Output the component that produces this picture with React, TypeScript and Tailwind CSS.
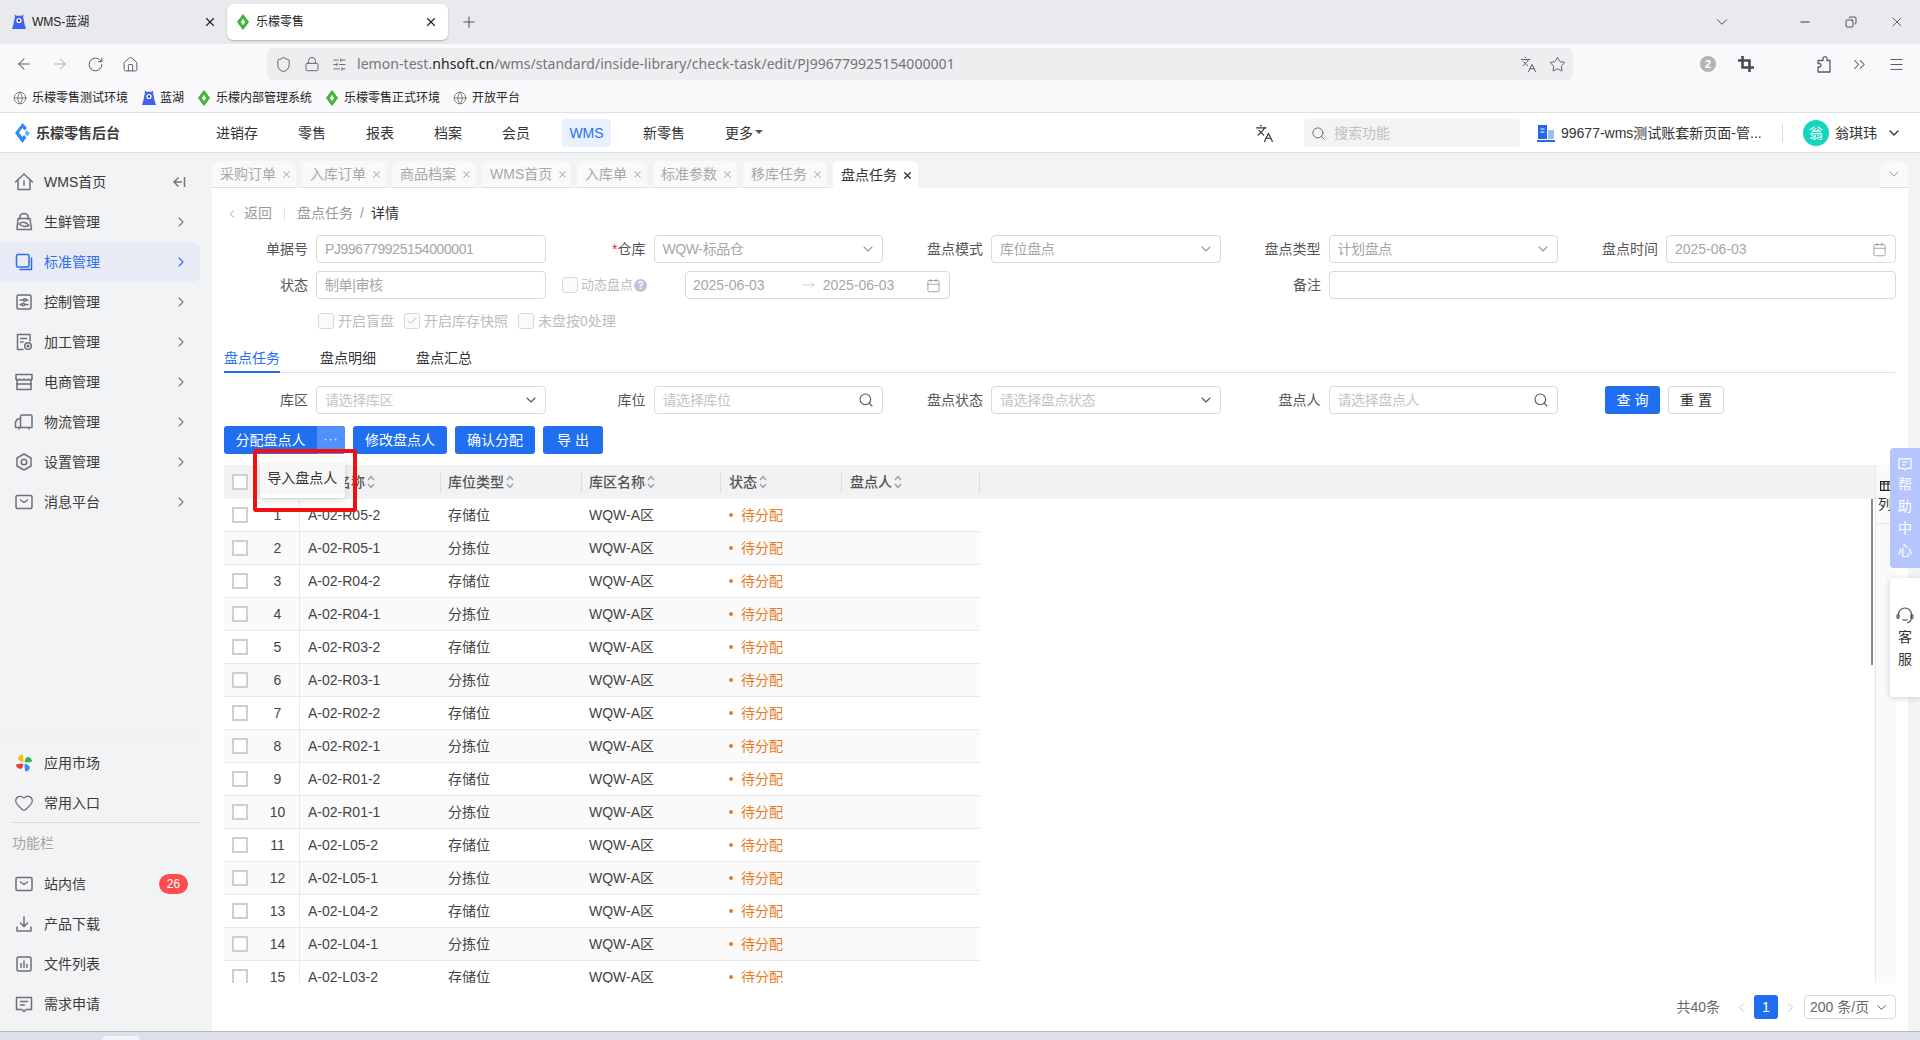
import React from "react";
import { ArrowLeft, ArrowRight, RotateCw, Home, Shield, Lock, SlidersHorizontal, Languages, Star, ChevronsRight, Menu, ChevronDown, ChevronRight, ChevronLeft, Plus, X, Minus, Copy, Search, Calendar, Globe, Check, Heart, MoveRight } from "lucide-react";

const Leaf = () => (
  <svg width={12} height={16} viewBox="0 0 12 16" className="shrink-0">
    <path d="M6 0 C7.5 2 9.5 4.5 12 8 C9.5 11.5 7.5 14 6 16 C4.5 14 2.5 11.5 0 8 C2.5 4.5 4.5 2 6 0 Z M6 4.8 L3.8 8 L6 11.2 L8.2 8 Z" fill="#3fb53a" fillRule="evenodd" />
  </svg>
);
const Lan = () => (
  <svg width={14} height={16} viewBox="0 0 14 16" className="shrink-0">
    <path d="M3 3 L2.5 0.5 L5 2 Q7 1.2 9 2 L11.5 0.5 L11 3 Q12 6 12.5 10 L14 15 H0 L1.5 10 Q2 6 3 3 Z" fill="#3f63f0" />
    <circle cx="7" cy="6.5" r="2.6" fill="#fff" />
    <circle cx="7" cy="6.5" r="1.2" fill="#23306e" />
  </svg>
);
const Logo = () => (
  <svg width={15} height={20} viewBox="0 0 15 20" className="shrink-0">
    <path d="M7.5 0 L12 5 L9.5 7.5 L7.5 5 L4 9.5 L7.5 14 L9 12 L11.5 14.5 L7.5 20 L0 10 Z" fill="#2f8bf5" />
    <path d="M11 7 L15 10 L12.5 13.5 L10 11 Z" fill="#5fb4fa" />
  </svg>
);

const Ico = ({ children, c = "#6e7079" }: { children: React.ReactNode; c?: string }) => (
  <svg width={20} height={20} viewBox="0 0 20 20" fill="none" stroke={c} strokeWidth={1.5} strokeLinecap="round" strokeLinejoin="round" className="shrink-0">
    {children}
  </svg>
);

const Mail = () => <Ico><rect x="2" y="3.5" width="16" height="13" rx="1.5" /><path d="M6.5 8 L10 10.5 L13.5 8" /></Ico>;
const icons: Record<string, React.ReactNode> = {
  home: <Ico><path d="M1.5 10 L10 2 L18.5 10" /><path d="M4 8 V17.5 H16 V8" /><path d="M10 9 V13" /></Ico>,
  fresh: <Ico><path d="M6 7 V4.5 A4 3 0 0 1 14 4.5 V7" /><path d="M4 6.5 H16 L17.5 17.5 H3 Z" /><path d="M5 12 Q10 8 15 13.5 Q10 16 5 12 Z" /></Ico>,
  std: <Ico c="#2a6ff0"><rect x="2.5" y="2.5" width="12.5" height="12.5" rx="1.5" /><path d="M17.5 6 V17.5 H6" /></Ico>,
  ctrl: <Ico><rect x="3" y="3" width="14" height="14" rx="1.5" /><path d="M6 8 H9 M12.5 8 H14 M6 12.5 H7.5 M11 12.5 H14" /><circle cx="10.8" cy="8" r="1.3" /><circle cx="9.2" cy="12.5" r="1.3" /></Ico>,
  proc: <Ico><path d="M9 17.5 H3.5 V2.5 H16 V9" /><path d="M6.5 6.5 H12.5 M6.5 10 H9" /><circle cx="14" cy="14" r="3.3" /><circle cx="14" cy="14" r="0.8" /></Ico>,
  shop: <Ico><path d="M2 7 V2.5 H18 V7" /><path d="M2 7 Q4 9.5 6 7 Q8 9.5 10 7 Q12 9.5 14 7 Q16 9.5 18 7" /><path d="M3 7 V17.5 H17 V7" /><path d="M3 12 H17" /></Ico>,
  truck: <Ico><path d="M6.5 15.5 V4.5 Q6.5 3 8 3 H17 Q18 3 18 4.5 V15.5 H6.5 Z" /><path d="M6.5 7 H3.5 L1.5 10 V15.5 H6.5" /><path d="M5 15.5 V17 M15 15.5 V17" /></Ico>,
  gear: <Ico><path d="M10 2 L17 6 V14 L10 18 L3 14 V6 Z" /><circle cx="10" cy="10" r="2.8" /></Ico>,
  mail: <Mail />,
  down: <Ico><path d="M10 3 V12.5 M6.5 9 L10 12.5 L13.5 9" /><path d="M3 13 V17 H17 V13" /></Ico>,
  file: <Ico><rect x="3" y="3" width="14" height="14" rx="1.5" /><path d="M7 13.5 V9.5 M10 13.5 V7 M13 13.5 V10.5" /></Ico>,
  req: <Ico><path d="M2.5 3.5 H17.5 V15.5 H12 L10 17.5 L8 15.5 H2.5 Z" /><path d="M6.5 7.5 H13.5 M6.5 11 H10.5" /></Ico>,
};

const Pin = () => (
  <svg width={20} height={20} viewBox="0 0 20 20" className="shrink-0">
    <path d="M9.3 9.3 C9.5 6 9.5 3 8.5 1.5 C6 1.5 4.5 3.5 4 6 C5.5 7.5 7 8.7 9.3 9.3 Z" fill="#fbb90e" />
    <path d="M10.7 9.3 C13 9.5 16 9.3 18 8.5 C18 6 16 4 13 4 C11.5 5.5 10.7 7 10.7 9.3 Z" fill="#34b54b" />
    <path d="M9.3 10.7 C7 10.5 4 10.7 2 11.5 C2 14 4 15.8 7 16 C8.5 14.5 9.3 13 9.3 10.7 Z" fill="#ec3b3b" />
    <path d="M10.7 10.7 C10.5 13 10.5 16 11.5 18.5 C14 18.5 15.5 16.5 16 14 C14.5 12.5 13 11.3 10.7 10.7 Z" fill="#2f8bf5" />
  </svg>
);

const Row = ({ icon, label, chev, active, badge }: { icon: React.ReactNode; label: string; chev?: boolean; active?: boolean; badge?: string }) => (
  <div className={`flex h-10 w-[200px] items-center rounded-r-lg pl-[14px] text-[14px] ${badge ? "pr-3" : "pr-[11px]"} ${active ? "bg-[#e8ebf5] text-[#2a6ff0]" : "text-[#3a3a3a]"}`}>
    <span className="w-[30px] shrink-0">{icon}</span>
    <span className="flex-1">{label}</span>
    {chev && <ChevronRight size={16} strokeWidth={1.6} className={active ? "text-[#2a6ff0]" : "text-[#777]"} />}
    {badge && <span className="flex h-5 w-[29px] items-center justify-center rounded-full bg-[#ff4d4f] text-[12px] text-white">{badge}</span>}
  </div>
);

const Field = ({ label, req, children, className = "" }: { label: string; req?: boolean; children: React.ReactNode; className?: string }) => (
  <div className={`flex items-center justify-end gap-2 ${className}`}>
    <span className="whitespace-nowrap text-[14px] text-[#555]">{req && <span className="text-[#f5222d]">*</span>}{label}</span>
    {children}
  </div>
);
const Box = ({ text, ph, icon, wide, plain }: { text?: string; ph?: boolean; icon?: React.ReactNode; wide?: boolean; plain?: boolean }) => (
  <div className={`flex h-7 items-center justify-between rounded-[4px] border border-[#d9d9d9] bg-white pl-2 pr-2 text-[14px] ${wide ? "w-[566.5px]" : "w-[229.5px]"} ${ph ? "text-[#c4c4c4]" : "text-[#a6a6a6]"}`}>
    <span className={`whitespace-nowrap ${plain ? "" : "tracking-[-0.4px]"}`}>{text}</span>
    {icon}
  </div>
);
const Dn = ({ dark }: { dark?: boolean }) => <ChevronDown size={16} strokeWidth={1.6} className={`-mr-[2px] ${dark ? "text-[#555]" : "text-[#999]"}`} />;
const Sq = ({ on }: { on?: boolean }) => (
  <span className="flex h-4 w-4 shrink-0 items-center justify-center rounded-[3px] border border-[#d9d9d9] bg-[#fbfbfb]">
    {on && <Check size={12} strokeWidth={2} className="text-[#bbb]" />}
  </span>
);
const Cb = ({ label, on }: { label: string; on?: boolean }) => (
  <span className="flex items-center gap-1 text-[14px] text-[#bdbdbd]"><Sq on={on} />{label}</span>
);
const Sort = () => (
  <svg width={8} height={14} viewBox="0 0 8 14" fill="none" stroke="#999" strokeWidth={1.2} className="ml-0.5 shrink-0">
    <path d="M1 5 L4 1.5 L7 5 M1 9 L4 12.5 L7 9" />
  </svg>
);

const topTabs: [string, number][] = [
  ["采购订单", 84], ["入库订单", 84], ["商品档案", 84], ["WMS首页", 89], ["入库单", 70], ["标准参数", 84], ["移库任务", 84],
];
const rows = ["R05-2", "R05-1", "R04-2", "R04-1", "R03-2", "R03-1", "R02-2", "R02-1", "R01-2", "R01-1", "L05-2", "L05-1", "L04-2", "L04-1", "L03-2"];
const grid = "grid grid-cols-[32px_44px_140px_141px_139px_121px_139px] w-[756px]";

export default function App() {
  return (
    <div className="relative flex h-[1040px] w-[1920px] flex-col overflow-hidden bg-[#dde0ea] font-['Liberation_Sans','Noto_Sans_CJK_SC',sans-serif] text-[#333]">
      {/* browser tabs */}
      <div className="flex h-11 shrink-0 items-center bg-[#e9eaed] pr-[15px] text-[12px] text-[#222]">
        <div className="flex h-9 w-[224px] items-center pl-[12px] pr-[7px]">
          <span className="mr-[6px]"><Lan /></span>
          <span className="flex-1">WMS-蓝湖</span>
          <X size={14} strokeWidth={2} />
        </div>
        <div className="ml-[3px] flex h-9 w-[221px] items-center rounded-md bg-white pl-[10px] pr-[10px] shadow-[0_1px_2px_rgba(0,0,0,0.25)]">
          <span className="mr-[7px]"><Leaf /></span>
          <span className="flex-1">乐檬零售</span>
          <X size={14} strokeWidth={2} />
        </div>
        <Plus size={18} strokeWidth={1.4} className="ml-[12px] text-[#555]" />
        <div className="flex-1" />
        <ChevronDown size={18} strokeWidth={1.3} className="mr-[67px] text-[#444]" />
        <Minus size={14} strokeWidth={1.5} className="mr-[33px] text-[#222]" />
        <Copy size={12} strokeWidth={1.5} className="mr-[32px] -scale-x-100 text-[#222]" />
        <X size={16} strokeWidth={1} className="text-[#222]" />
      </div>
      {/* toolbar */}
      <div className="flex h-10 shrink-0 items-center bg-[#f9f9fb] text-[#5b5b66]">
        <div className="flex w-[267px] items-center gap-[18px] pl-[15px]">
          <ArrowLeft size={18} strokeWidth={1.4} />
          <ArrowRight size={18} strokeWidth={1.4} className="text-[#b0b0b8]" />
          <RotateCw size={17} strokeWidth={1.4} />
          <Home size={17} strokeWidth={1.4} />
        </div>
        <div className="flex h-8 w-[1306px] items-center rounded-md bg-[#eeeef1] pl-[8px] pr-[7px]">
          <Shield size={17} strokeWidth={1.4} />
          <Lock size={16} strokeWidth={1.4} className="ml-[12px]" />
          <SlidersHorizontal size={15} strokeWidth={1.4} className="ml-[12px]" />
          <span className="mb-[2px] ml-[10px] flex-1 whitespace-nowrap font-['Noto_Sans',sans-serif] text-[14px] tracking-[0.05px] text-[#74747c]">lemon-test.<span className="text-[#222]">nhsoft.cn</span>/wms/standard/inside-library/check-task/edit/PJ996779925154000001</span>
          <Languages size={17} strokeWidth={1.4} />
          <Star size={17} strokeWidth={1.4} className="ml-[12px]" />
        </div>
        <span className="ml-[127px] flex h-4 w-4 items-center justify-center rounded-full bg-[#b4b4b8] text-[11px] font-bold text-white">2</span>
        <svg width={16} height={16} viewBox="0 0 16 16" fill="none" stroke="#4a4a55" strokeWidth={2.6} className="ml-[22px] shrink-0">
          <path d="M4.5 0 V11.5 H16 M0 4.5 H11.5 V16" />
        </svg>
        <svg width={16} height={18} viewBox="0 0 16 18" fill="none" stroke="#5b5b66" strokeWidth={1.3} strokeLinejoin="round" className="ml-[62px] shrink-0">
          <path d="M2 17 V12 H4 A2 2 0 0 0 4 8.5 H2 V5.5 H7 V3 A2.2 2.2 0 0 1 11 3 V5.5 H14 V17 Z" />
        </svg>
        <ChevronsRight size={19} strokeWidth={1.3} className="ml-[18px]" />
        <Menu size={17} strokeWidth={1.4} className="ml-[19px]" />
      </div>
      {/* bookmarks */}
      <div className="flex h-7 shrink-0 items-center bg-[#f9f9fb] pl-[13px] text-[12px] text-[#222]">
        <Globe size={14} strokeWidth={1.2} className="mr-[5px] text-[#555]" />
        <span>乐檬零售测试环境</span>
        <span className="ml-[14px] mr-[4px]"><Lan /></span>
        <span>蓝湖</span>
        <span className="ml-[14px] mr-[6px]"><Leaf /></span>
        <span>乐檬内部管理系统</span>
        <span className="ml-[14px] mr-[6px]"><Leaf /></span>
        <span>乐檬零售正式环境</span>
        <Globe size={14} strokeWidth={1.2} className="ml-[13px] mr-[5px] text-[#555]" />
        <span>开放平台</span>
      </div>
      {/* app header */}
      <div className="flex h-[41px] shrink-0 items-center border-y border-[#dedfe2] bg-white pt-[1px] text-[14px]">
        <div className="flex w-[216px] items-center pl-[15px]">
          <Logo />
          <span className="ml-[6px] font-bold text-[#3c3c3c]">乐檬零售后台</span>
        </div>
        <span>进销存</span>
        <span className="ml-[40px]">零售</span>
        <span className="ml-[40px]">报表</span>
        <span className="ml-[40px]">档案</span>
        <span className="ml-[40px]">会员</span>
        <span className="ml-[32px] flex h-7 w-[49px] items-center justify-center rounded bg-[#e8f0fe] text-[#2a6ff0]">WMS</span>
        <span className="ml-[32px]">新零售</span>
        <span className="ml-[40px] flex items-center">更多<span className="ml-[2px] mt-[-2px] h-0 w-0 border-x-[4px] border-t-[4px] border-x-transparent border-t-[#555]" /></span>
        <div className="flex-1" />
        <Languages size={19} strokeWidth={1.5} className="mr-[30px] text-[#333]" />
        <div className="flex h-7 w-[216px] items-center rounded bg-[#f2f3f5] pl-[7px] text-[#c0c0c0]">
          <Search size={15} strokeWidth={1.5} className="mr-[8px] text-[#666]" />搜索功能
        </div>
        <svg width={18} height={18} viewBox="0 0 18 18" className="ml-[17px] mr-[6px] shrink-0">
          <path d="M1 1 H10 V15 H1 Z" fill="#2468e8" />
          <path d="M11 6 H17 V15 H11 Z" fill="#9bbcf5" />
          <path d="M0 16 H18 V18 H0 Z" fill="#2468e8" />
          <path d="M3.5 5 H7.5 M3.5 8 H7.5" stroke="#fff" strokeWidth={1.2} />
        </svg>
        <span className="w-[200px] whitespace-nowrap">99677-wms测试账套新页面-管...</span>
        <span className="ml-[21px] h-[18px] w-px bg-[#d9d9d9]" />
        <span className="ml-[20px] flex h-[26px] w-[26px] items-center justify-center rounded-full bg-[#14d6bf] text-[14px] text-white">翁</span>
        <span className="ml-[6px]">翁琪玮</span>
        <ChevronDown size={16} strokeWidth={2} className="ml-[9px] mr-[18px]" />
      </div>
      {/* body */}
      <div className="flex min-h-0 flex-1 border-b border-[#b4b6bb]">
        <aside className="flex w-[212px] shrink-0 flex-col bg-[#f2f3f5] pt-[9px]">
          <div className="flex h-10 w-[200px] items-center pl-[14px] pr-[14px] text-[14px] text-[#3a3a3a]">
            <span className="w-[30px]">{icons.home}</span>
            <span className="flex-1">WMS首页</span>
            <svg width={14} height={14} viewBox="0 0 14 14" fill="none" stroke="#777" strokeWidth={1.5}><path d="M6.5 2.5 L2 7 L6.5 11.5 M2 7 H10 M12.5 2 V12" /></svg>
          </div>
          <Row icon={icons.fresh} label="生鲜管理" chev />
          <Row icon={icons.std} label="标准管理" chev active />
          <Row icon={icons.ctrl} label="控制管理" chev />
          <Row icon={icons.proc} label="加工管理" chev />
          <Row icon={icons.shop} label="电商管理" chev />
          <Row icon={icons.truck} label="物流管理" chev />
          <Row icon={icons.gear} label="设置管理" chev />
          <Row icon={icons.mail} label="消息平台" chev />
          <div className="flex-1" />
          <div className="h-[10px] w-[200px] bg-[#f0f1f3]" />
          <div className="mt-[4px]"><Row icon={<Pin />} label="应用市场" /></div>
          <Row icon={<Heart size={20} strokeWidth={1.5} className="text-[#6e7079]" />} label="常用入口" />
          <div className="-mt-px ml-3 h-px w-[188px] bg-[#dcdde0]" />
          <div className="flex h-[41px] items-center pl-3 text-[14px] text-[#a3a3a3]">功能栏</div>
          <Row icon={icons.mail} label="站内信" badge="26" />
          <Row icon={icons.down} label="产品下载" />
          <Row icon={icons.file} label="文件列表" />
          <Row icon={icons.req} label="需求申请" />
          <div className="h-[7px]" />
        </aside>
        <div className="flex min-w-0 flex-1 flex-col bg-[#f2f3f5]">
          {/* page tabs */}
          <div className="flex h-[35px] shrink-0 items-end gap-[6px] pr-[12px]">
            {topTabs.map(([t, w]) => (
              <div key={t} style={{ width: w }} className="flex h-[27px] items-center gap-[5px] rounded-t-md border-b border-[#dcdde0] bg-[#f9f9fa] pl-2 pt-[1px] text-[14px] text-[#a8a8a8]">
                {t}<X size={11} strokeWidth={2.2} className="text-[#aaa]" />
              </div>
            ))}
            <div className="flex h-[27px] w-[85px] items-center gap-[5px] rounded-t-md bg-white pl-2 pt-[1px] text-[14px] text-[#333]">
              盘点任务<X size={11} strokeWidth={3} className="text-[#333]" />
            </div>
            <div className="flex-1" />
            <div className="flex h-[27px] w-[28px] items-center justify-center rounded-t-md border-b border-[#dcdde0] bg-[#f9f9fa]"><ChevronDown size={16} strokeWidth={1.4} className="text-[#999]" /></div>
          </div>
          {/* page */}
          <div className="mr-[12px] flex min-h-0 flex-1 flex-col bg-white">
            <div className="flex h-[47px] shrink-0 items-center pl-[13px] pt-[4px] text-[14px] text-[#999]">
              <ChevronLeft size={14} strokeWidth={1.5} className="mr-[5px]" />返回
              <span className="mx-[12px] h-3.5 w-px bg-[#e5e5e5]" />
              盘点任务<span className="mx-[7px]">/</span><span className="text-[#333]">详情</span>
            </div>
            <div className="grid grid-cols-[333.5px_repeat(4,337.5px)] gap-y-[8px]">
              <Field label="单据号"><Box text="PJ996779925154000001" /></Field>
              <Field label="仓库" req><Box text="WQW-标品仓" icon={<Dn />} /></Field>
              <Field label="盘点模式"><Box text="库位盘点" icon={<Dn />} /></Field>
              <Field label="盘点类型"><Box text="计划盘点" icon={<Dn />} /></Field>
              <Field label="盘点时间"><Box plain text="2025-06-03" icon={<Calendar size={15} strokeWidth={1.4} className="text-[#999]" />} /></Field>
              <Field label="状态"><Box text="制单|审核" /></Field>
              <div className="col-span-2 flex items-center pl-[16.5px]">
                <Sq /><span className="ml-[3px] text-[13px] text-[#bdbdbd]">动态盘点</span>
                <span className="ml-[1px] flex h-[13px] w-[13px] items-center justify-center rounded-full bg-[#bcc3d4] text-[10px] font-bold text-white">?</span>
                <div className="ml-[38px] flex h-7 w-[265px] items-center rounded-[4px] border border-[#d9d9d9] pl-[7px] pr-2 text-[14px] text-[#a6a6a6]">
                  2025-06-03
                  <MoveRight size={14} strokeWidth={1.2} className="ml-[36px] mr-[8px] text-[#bbb]" />
                  2025-06-03
                  <span className="flex-1" />
                  <Calendar size={15} strokeWidth={1.4} className="text-[#999]" />
                </div>
              </div>
              <Field label="备注" className="col-span-2"><Box wide /></Field>
            </div>
            <div className="flex h-[46px] shrink-0 items-center gap-[4px] pb-[2px] pl-[106px]">
              <Cb label="开启盲盘" /><span className="w-[2px]" /><Cb label="开启库存快照" on /><span className="w-[2px]" /><Cb label="未盘按0处理" />
            </div>
            {/* inner tabs */}
            <div className="ml-[12px] mr-[13px] flex h-[28px] shrink-0 items-start gap-[40px] border-b border-[#dfe1e4] pt-[3px] text-[14px]">
              <span className="h-[25px] border-b-2 border-[#1f6ff0] text-[#1f6ff0]">盘点任务</span>
              <span className="text-[#333]">盘点明细</span>
              <span className="text-[#333]">盘点汇总</span>
            </div>
            <div className="mt-[13px] grid shrink-0 grid-cols-[333.5px_repeat(4,337.5px)]">
              <Field label="库区"><Box ph text="请选择库区" icon={<Dn dark />} /></Field>
              <Field label="库位"><Box ph text="请选择库位" icon={<Search size={16} strokeWidth={1.6} className="text-[#555]" />} /></Field>
              <Field label="盘点状态"><Box ph text="请选择盘点状态" icon={<Dn dark />} /></Field>
              <Field label="盘点人"><Box ph text="请选择盘点人" icon={<Search size={16} strokeWidth={1.6} className="text-[#555]" />} /></Field>
              <div className="flex items-center pl-[47px] text-[14px]">
                <span className="flex h-7 w-[55px] items-center justify-center rounded-[3px] bg-[#1f6ff0] text-white">查 询</span>
                <span className="ml-[8px] flex h-7 w-[56px] items-center justify-center rounded-[3px] border border-[#d9d9d9] text-[#333]">重 置</span>
              </div>
            </div>
            {/* action buttons */}
            <div className="relative mt-[12px] flex shrink-0 gap-[8px] pl-[12px] text-[14px] text-white">
              <div className="flex h-7 w-[121px] overflow-hidden rounded-[3px] bg-[#1f6ff0]">
                <span className="flex flex-1 items-center justify-center">分配盘点人</span>
                <span className="flex w-[28px] items-center justify-center bg-[#5290fb] pb-[2px] text-[12px] tracking-[1px]">···</span>
              </div>
              <span className="flex h-7 w-[94px] items-center justify-center rounded-[3px] bg-[#1f6ff0]">修改盘点人</span>
              <span className="flex h-7 w-[80px] items-center justify-center rounded-[3px] bg-[#1f6ff0]">确认分配</span>
              <span className="flex h-7 w-[60px] items-center justify-center rounded-[3px] bg-[#1f6ff0]">导 出</span>
              {/* popup */}
              <div className="absolute left-[47.5px] top-[32px] z-20 h-10 w-[85.5px] rounded-[3px] bg-white py-1 shadow-[0_2px_8px_rgba(0,0,0,0.15)]">
                <div className="flex h-8 items-center justify-center bg-[#f7f7f7] pt-[1px] text-[14px] text-[#333]">导入盘点人</div>
              </div>
              <div className="absolute left-[41px] top-[23px] z-30 h-[63px] w-[104px] rounded-[3px] border-4 border-[#f01010]" />
            </div>
            {/* table */}
            <div className="ml-[12px] mr-[12px] mt-[11px] flex min-h-0 flex-1">
              <div className="relative min-w-0 flex-1 overflow-hidden">
                <div className="flex h-[34px] items-center bg-[#f1f2f4]">
                  <div className={`${grid} items-center text-[14px] font-medium text-[#555]`}>
                    <span className="pl-2"><span className="flex h-4 w-4 border-2 border-[#cfcfcf] bg-white" /></span>
                    <span />
                    <span className="flex items-center pl-[9px]">库位名称<Sort /></span>
                    <span className="flex items-center border-l border-[#dcdcdc] pl-[7px]">库位类型<Sort /></span>
                    <span className="flex items-center border-l border-[#dcdcdc] pl-[7px]">库区名称<Sort /></span>
                    <span className="flex items-center border-l border-[#dcdcdc] pl-[8px]">状态<Sort /></span>
                    <span className="flex items-center border-x border-[#dcdcdc] pl-[8px]">盘点人<Sort /></span>
                  </div>
                </div>
                {rows.map((r, i) => (
                  <div key={r} className={`${grid} h-[33px] items-center border-b border-[#e8eaeb] text-[14px] text-[#444] ${i % 2 ? "bg-[#f9faf9]" : "bg-white"}`}>
                    <span className="pl-2"><span className="flex h-4 w-4 border-2 border-[#cfcfcf] bg-white" /></span>
                    <span className="flex h-full items-center justify-center border-r border-[#e8eaeb]">{i + 1}</span>
                    <span className="pl-[8px]">A-02-{r}</span>
                    <span className="pl-[8px]">{i % 2 ? "分拣位" : "存储位"}</span>
                    <span className="pl-[8px]">WQW-A区</span>
                    <span className="flex items-center pl-[9px] text-[#ea7a1f]"><span className="mr-[8px] h-[4px] w-[4px] rounded-full bg-[#ea7a1f]" />待分配</span>
                    <span />
                  </div>
                ))}
                <div className="absolute right-[2px] top-[34px] h-[166px] w-[2px] bg-[#8a8a8a]" />
              </div>
              <div className="w-[21px] shrink-0 border-l border-[#e4e6e9] bg-[#f9fafb]">
                <div className="h-[59px] border-b border-[#e4e6e9] pl-[4px] pt-[16px] text-[14px] leading-[17px] text-[#333]">
                  <svg width={12} height={10} viewBox="0 0 12 10" fill="none" stroke="#222" strokeWidth={1.2} className="block"><rect x="0.6" y="0.6" width="10.8" height="8.8" /><path d="M4 0.6 V9.4 M8 0.6 V9.4 M0.6 3 H11.4" /></svg>
                  <div className="mt-[5px] -ml-[2px] overflow-hidden whitespace-nowrap">列</div>
                </div>
              </div>
            </div>
            {/* pagination */}
            <div className="flex h-[48px] shrink-0 items-center justify-end pr-[12px] text-[14px] text-[#666]">
              共40条
              <ChevronLeft size={15} strokeWidth={1.3} className="ml-[14px] text-[#bbb]" />
              <span className="ml-[5px] flex h-6 w-6 items-center justify-center rounded-[3px] bg-[#1f6ff0] text-white">1</span>
              <ChevronRight size={15} strokeWidth={1.3} className="ml-[5px] text-[#bbb]" />
              <span className="ml-[6px] flex h-6 w-[92px] items-center justify-between rounded-[4px] border border-[#d9d9d9] pl-[5px] pr-[6px]">200 条/页<ChevronDown size={15} strokeWidth={1.6} className="text-[#555]" /></span>
            </div>
          </div>
        </div>
      </div>
      {/* bottom strip */}
      <div className="flex h-[8px] shrink-0 items-end bg-[#dde0ea] pl-[102px]">
        <span className="h-[4px] w-[38px] rounded-t-md bg-[#f3f4f7]" />
      </div>
      {/* floating help */}
      <div className="absolute left-[1890px] top-[448px] z-40 flex h-[120px] w-[30px] flex-col items-center rounded-l-[4px] bg-[#b5c6ff] pt-[8px] text-[14px] leading-[22px] text-white">
        <svg width={16} height={16} viewBox="0 0 20 20" fill="none" stroke="#fff" strokeWidth={1.5}><path d="M2.5 3.5 H17.5 V15.5 H12 L10 17.5 L8 15.5 H2.5 Z" /><path d="M6.5 7.5 H13.5 M6.5 11 H10.5" /></svg>
        <span className="mt-[1px]">帮</span><span>助</span><span>中</span><span>心</span>
      </div>
      <div className="absolute left-[1890px] top-[578px] z-40 flex h-[119px] w-[30px] flex-col items-center rounded-l-[4px] bg-white pt-[29px] text-[14px] leading-[22px] text-[#333] shadow-[0_1px_6px_rgba(0,0,0,0.18)]">
        <svg width={18} height={18} viewBox="0 0 18 18" fill="none" stroke="#555" strokeWidth={1.2}><path d="M2.5 10 V7.5 A6.5 6.5 0 0 1 15.5 7.5 V10 Q15.5 15 11 16" /><path d="M6.5 12.5 Q9 14 11.5 12.5" /><rect x="1" y="7.5" width="2" height="4" rx="1" /><rect x="15" y="7.5" width="2" height="4" rx="1" /></svg>
        <span className="mt-[1px]">客</span><span>服</span>
      </div>
    </div>
  );
}
